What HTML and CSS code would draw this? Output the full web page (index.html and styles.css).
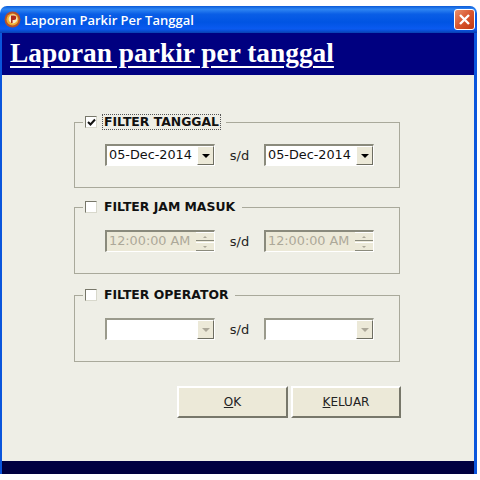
FILE: index.html
```html
<!DOCTYPE html>
<html lang="id">
<head>
    <meta charset="UTF-8">
    <meta name="viewport" content="width=device-width, initial-scale=1.0">
    <title>Laporan Parkir Per Tanggal</title>
    <link rel="stylesheet" href="styles.css">
</head>
<body>

<div class="window">
    <div class="titlebar">
        <svg class="app-icon" width="17" height="17" viewBox="0 0 17 17">
            <circle cx="8.5" cy="8.5" r="8" fill="#b5502a"/>
            <circle cx="8.5" cy="8.5" r="6" fill="#f0b030"/>
            <circle cx="9" cy="8" r="4.4" fill="#f7e9c8"/>
            <path d="M7 12V4.5h3a2.2 2.2 0 0 1 0 4.6H8.6V12z" fill="#b02a18"/>
        </svg>
        <span class="titlebar-text">Laporan Parkir Per Tanggal</span>
        <div class="close-btn">
            <svg width="13" height="13" viewBox="0 0 13 13">
                <path d="M2 2l9 9M11 2l-9 9" stroke="#fff" stroke-width="2.4" fill="none"/>
            </svg>
        </div>
    </div>

    <div class="frame">
        <div class="header">
            <h1 class="heading">Laporan parkir per tanggal</h1>
        </div>

        <div class="content">
            <fieldset class="group group-tanggal">
                <legend>
                    <span class="check">
                        <svg width="9" height="9" viewBox="0 0 9 9">
                            <path d="M1 4l2.5 2.5L8 1.5" stroke="#111" stroke-width="2" fill="none"/>
                        </svg>
                    </span>
                    <span class="label focused">FILTER TANGGAL</span>
                </legend>
                <div class="row">
                    <div class="combo">
                        <span class="combo-text">05-Dec-2014</span>
                        <span class="combo-btn"><i class="arrow"></i></span>
                    </div>
                    <span class="sd">s/d</span>
                    <div class="combo">
                        <span class="combo-text">05-Dec-2014</span>
                        <span class="combo-btn"><i class="arrow"></i></span>
                    </div>
                </div>
            </fieldset>

            <fieldset class="group group-jam">
                <legend>
                    <span class="check"></span>
                    <span class="label">FILTER JAM MASUK</span>
                </legend>
                <div class="row">
                    <div class="combo disabled">
                        <span class="combo-text">12:00:00 AM</span>
                        <span class="spin">
                            <span class="spin-btn"><i class="arrow-up"></i></span>
                            <span class="spin-btn"><i class="arrow-down"></i></span>
                        </span>
                    </div>
                    <span class="sd">s/d</span>
                    <div class="combo disabled">
                        <span class="combo-text">12:00:00 AM</span>
                        <span class="spin">
                            <span class="spin-btn"><i class="arrow-up"></i></span>
                            <span class="spin-btn"><i class="arrow-down"></i></span>
                        </span>
                    </div>
                </div>
            </fieldset>

            <fieldset class="group group-operator">
                <legend>
                    <span class="check"></span>
                    <span class="label">FILTER OPERATOR</span>
                </legend>
                <div class="row">
                    <div class="combo empty">
                        <span class="combo-text"></span>
                        <span class="combo-btn"><i class="arrow"></i></span>
                    </div>
                    <span class="sd">s/d</span>
                    <div class="combo empty">
                        <span class="combo-text"></span>
                        <span class="combo-btn"><i class="arrow"></i></span>
                    </div>
                </div>
            </fieldset>

            <div class="buttons">
                <button class="btn btn-ok"><u>O</u>K</button>
                <button class="btn"><u>K</u>ELUAR</button>
            </div>
        </div>

        <div class="footer"></div>
    </div>
</div>

</body>
</html>
```

FILE: styles.css
```css
body {
    margin: 0;
    background-color: #fff;
    font-family: "DejaVu Sans", sans-serif;
}
.window {
    width: 477px;
    height: 468px;
    margin-top: 6px;
    display: flex;
    flex-direction: column;
}
.titlebar {
    height: 27px;
    display: flex;
    align-items: center;
    padding: 0 2px 0 4px;
    border-radius: 7px 7px 0 0;
    background: linear-gradient(to bottom, #0a5ad8 0%, #2f86f2 12%, #0a5ee6 30%, #0054e3 60%, #0a5af0 85%, #0840b0 100%);
}
.app-icon {
    flex-shrink: 0;
}
.titlebar-text {
    margin-left: 3px;
    color: #fff;
    font-family: "Open Sans", sans-serif;
    font-size: 13px;
    font-weight: 600;
}
.close-btn {
    margin-left: auto;
    width: 19px;
    height: 19px;
    display: flex;
    align-items: center;
    justify-content: center;
    border: 1px solid #fff;
    border-radius: 3px;
    background: linear-gradient(135deg, #e8906c 0%, #d9552e 50%, #bf3a14 100%);
}
.frame {
    flex: 1;
    display: flex;
    flex-direction: column;
    border-left: 2px solid #0a55dc;
    border-right: 3px solid #0a55dc;
}
.header {
    height: 42px;
    background-color: #000080;
    padding-left: 8px;
}
.heading {
    margin: 0;
    color: #fff;
    font-family: "Liberation Serif", serif;
    font-size: 27.4px;
    font-weight: bold;
    line-height: 40px;
    text-decoration: underline;
    text-decoration-thickness: 2px;
    text-underline-offset: 4px;
}
.content {
    flex: 1;
    background-color: #eeeee6;
    padding: 39px 0 0 72px;
}
.footer {
    height: 13px;
    background-color: #000040;
}
.group {
    box-sizing: border-box;
    width: 326px;
    margin: 0;
    padding: 14px 0 21px 30px;
    border: 1px solid #a9a99b;
}
.group-jam {
    margin-top: 11px;
    padding-top: 15px;
}
.group-operator {
    margin-top: 13px;
    padding-top: 15px;
}
.group legend {
    display: flex;
    align-items: center;
    height: 16px;
    margin-left: -22px;
    padding: 0 5px 0 2px;
}
.check {
    box-sizing: border-box;
    width: 12px;
    height: 12px;
    display: flex;
    align-items: center;
    justify-content: center;
    background-color: #fff;
    border: 1px solid #77776a;
    border-right-color: #d8d8cc;
    border-bottom-color: #d8d8cc;
}
.label {
    margin-left: 5px;
    padding: 0 1px;
    color: #111;
    font-size: 12.4px;
    font-weight: bold;
    line-height: 14px;
    border: 1px solid transparent;
}
.label.focused {
    border: 1px dotted #555;
}
.row {
    display: flex;
    align-items: center;
}
.combo {
    box-sizing: border-box;
    width: 110px;
    height: 22px;
    display: flex;
    background-color: #fff;
    border: 2px solid #8a8a7c;
    border-right: 1px solid #fff;
    border-bottom: 1px solid #fff;
}
.combo.empty {
    border-color: #9a9a8c #fff #fff #9a9a8c;
}
.combo.disabled {
    background-color: #ece9d8;
}
.combo-text {
    flex: 1;
    padding-left: 2px;
    color: #111;
    font-size: 12.8px;
    line-height: 18px;
    white-space: nowrap;
}
.combo.disabled .combo-text {
    color: #aca899;
}
.combo-btn {
    box-sizing: border-box;
    width: 17px;
    display: flex;
    align-items: center;
    justify-content: center;
    background-color: #ece9d8;
    border: 1px solid;
    border-color: #fff #6e6e62 #6e6e62 #fff;
}
.arrow {
    border-left: 4px solid transparent;
    border-right: 4px solid transparent;
    border-top: 4px solid #000;
}
.combo.empty .arrow {
    border-top-color: #aca899;
}
.spin {
    width: 18px;
    display: flex;
    flex-direction: column;
    gap: 1px;
}
.spin-btn {
    flex: 1;
    display: flex;
    align-items: center;
    justify-content: center;
    background-color: #ece9d8;
    border-top: 1px solid #fff;
    border-bottom: 1px solid #8a8a7c;
}
.arrow-up {
    border-left: 2px solid transparent;
    border-right: 2px solid transparent;
    border-bottom: 2px solid #aca899;
}
.arrow-down {
    border-left: 2px solid transparent;
    border-right: 2px solid transparent;
    border-top: 2px solid #aca899;
}
.sd {
    width: 49px;
    text-align: center;
    color: #222;
    font-size: 13px;
}
.buttons {
    display: flex;
    gap: 3px;
    margin-top: 24px;
    padding-left: 103px;
}
.btn {
    box-sizing: border-box;
    width: 110px;
    height: 32px;
    padding: 0;
    background-color: #ece9d8;
    border: 2px solid;
    border-color: #fff #77776a #77776a #fff;
    color: #222;
    font-family: "DejaVu Sans", sans-serif;
    font-size: 12px;
}
.btn-ok {
    width: 111px;
}
```
